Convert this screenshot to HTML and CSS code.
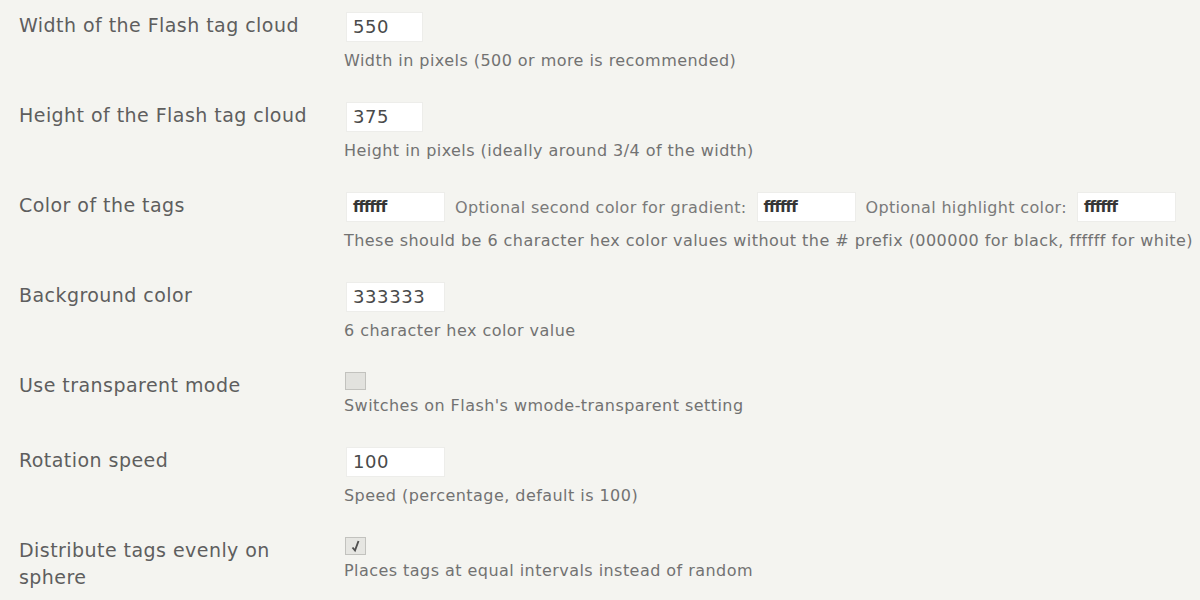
FILE: index.html
```html
<!DOCTYPE html>
<html>
<head>
<meta charset="utf-8">
<link rel="stylesheet" href="styles.css">
<title>Settings</title>
</head>
<body>
<div class="form-table">
  <div class="row">
    <div class="label">Width of the Flash tag cloud</div>
    <div class="field">
      <div class="line"><span class="input small">550</span></div>
      <div class="desc">Width in pixels (500 or more is recommended)</div>
    </div>
  </div>
  <div class="row">
    <div class="label">Height of the Flash tag cloud</div>
    <div class="field">
      <div class="line"><span class="input small">375</span></div>
      <div class="desc">Height in pixels (ideally around 3/4 of the width)</div>
    </div>
  </div>
  <div class="row">
    <div class="label">Color of the tags</div>
    <div class="field">
      <div class="line">
        <span class="input hex">ffffff</span>
        <span class="inline-text">Optional second color for gradient:</span>
        <span class="input hex">ffffff</span>
        <span class="inline-text">Optional highlight color:</span>
        <span class="input hex">ffffff</span>
      </div>
      <div class="desc">These should be 6 character hex color values without the # prefix (000000 for black, ffffff for white)</div>
    </div>
  </div>
  <div class="row">
    <div class="label">Background color</div>
    <div class="field">
      <div class="line"><span class="input">333333</span></div>
      <div class="desc">6 character hex color value</div>
    </div>
  </div>
  <div class="row">
    <div class="label">Use transparent mode</div>
    <div class="field">
      <div class="line cb-line"><span class="checkbox"></span></div>
      <div class="desc cb-desc">Switches on Flash's wmode-transparent setting</div>
    </div>
  </div>
  <div class="row">
    <div class="label">Rotation speed</div>
    <div class="field">
      <div class="line"><span class="input">100</span></div>
      <div class="desc">Speed (percentage, default is 100)</div>
    </div>
  </div>
  <div class="row">
    <div class="label">Distribute tags evenly on sphere</div>
    <div class="field">
      <div class="line cb-line"><span class="checkbox checked"><svg width="14" height="14" viewBox="0 0 14 14"><path d="M3.5 8.5 L6 11.5 L9.5 2" fill="none" stroke="#505050" stroke-width="1.9"/></svg></span></div>
      <div class="desc cb-desc">Places tags at equal intervals instead of random</div>
    </div>
  </div>
</div>
</body>
</html>
```
FILE: styles.css
```css
html, body {
  margin: 0;
  padding: 0;
  background: #f4f4f0;
}
body {
  font-family: "DejaVu Sans", Verdana, sans-serif;
  color: #5a5a5a;
  padding-top: 12px;
  overflow: hidden;
}
.form-table {
  display: flex;
  flex-direction: column;
  gap: 31px;
}
.row {
  display: grid;
  grid-template-columns: 325px 1fr;
}
.label {
  padding-left: 19px;
  font-size: 19px;
  letter-spacing: 0.45px;
  line-height: 27px;
  width: 290px;
  color: #5e5e5e;
}
.field {
  padding-left: 19px;
  display: flex;
  flex-direction: column;
}
.line {
  display: flex;
  align-items: center;
  height: 30px;
}
.cb-line {
  height: 18px;
}
.input {
  box-sizing: border-box;
  display: inline-block;
  flex: none;
  height: 30px;
  width: 99px;
  margin-left: 2px;
  background: #ffffff;
  border: 1px solid #ededea;
  font-size: 18px;
  letter-spacing: 0.6px;
  line-height: 28px;
  padding-left: 6px;
  color: #4a4a4a;
}
.input.small { width: 77px; }
.input.hex {
  font-size: 15px;
  color: #353535;
  font-weight: bold;
  letter-spacing: -1px;
}
.inline-text {
  font-size: 16px;
  letter-spacing: 0.35px;
  color: #7a7a7a;
  margin: 0 8px 0 10px;
  white-space: nowrap;
}
.checkbox {
  box-sizing: border-box;
  display: inline-flex;
  align-items: center;
  justify-content: center;
  width: 21px;
  height: 18px;
  margin-left: 1px;
  border: 1px solid #c2c2be;
  background: #e2e2de;
}
.checkbox.checked {
  background: #e6e6e2;
}
.desc {
  margin-top: 9px;
  font-size: 16px;
  letter-spacing: 0.45px;
  line-height: 20px;
  color: #727272;
  white-space: nowrap;
}
.cb-desc {
  margin-top: 6px;
}
```
